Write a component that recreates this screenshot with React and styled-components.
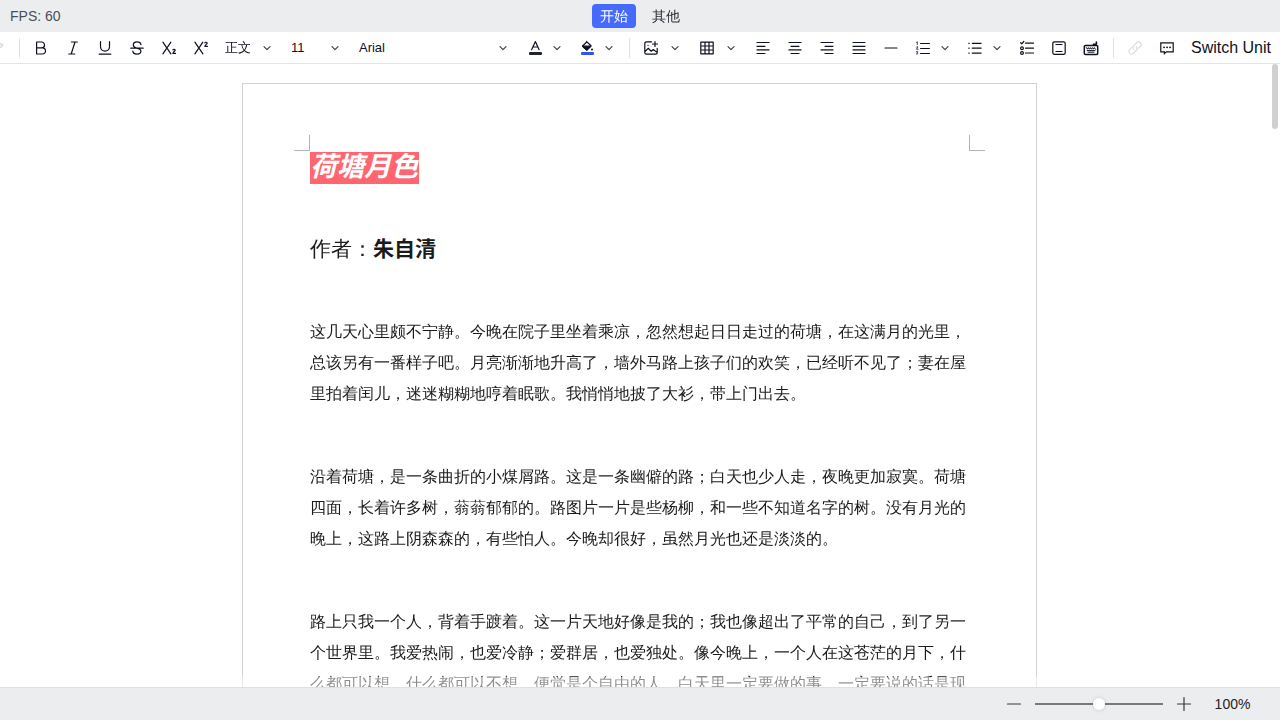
import React, { useState } from "react";
import styled, { createGlobalStyle } from "styled-components";

const textFont = `"Liberation Sans", "WenQuanYi Zen Hei", "Noto Sans CJK JP", sans-serif`;
const boldFont = `"Liberation Sans", "Noto Sans CJK JP", sans-serif`;

const GlobalStyle = createGlobalStyle`
  *, *::before, *::after { box-sizing: border-box; }
  body { margin: 0; font-family: ${textFont}; color: #0e111e; background: #fff; }
  button, select, input { font-family: inherit; color: inherit; margin: 0; }
`;

const Shell = styled.div`
  display: flex;
  flex-direction: column;
  height: 100vh;
  overflow: hidden;
`;

const Header = styled.header`
  display: grid;
  grid-template-columns: 1fr auto 1fr;
  align-items: center;
  flex: none;
  height: 32px;
  background: #ecedef;
  font-size: 14px;
`;

const Fps = styled.span`
  padding-left: 10px;
  color: #4b4d53;
`;

const Tabs = styled.nav`
  display: flex;
  gap: 8px;
`;

const Tab = styled.button`
  height: 24px;
  padding: 0 8px;
  border: 0;
  border-radius: 4px;
  font-size: 14px;
  line-height: 24px;
  color: ${(p) => (p.$active ? "#fff" : "#1f2329")};
  background: ${(p) => (p.$active ? "#466aff" : "transparent")};
`;

const Toolbar = styled.div`
  display: flex;
  align-items: center;
  justify-content: flex-end;
  gap: 8px;
  flex: none;
  height: 32px;
  padding-right: 9px;
  overflow: hidden;
  background: #fff;
  border-bottom: 1px solid #e3e4e8;
`;

const Divider = styled.span`
  flex: none;
  width: 1px;
  height: 20px;
  margin: 0 1px 0 2px;
  background: #e0e1e5;
`;

const ToolButton = styled.button`
  display: flex;
  align-items: center;
  justify-content: center;
  flex: none;
  width: ${(p) => p.$width || 24}px;
  height: 24px;
  padding: 0;
  border: 0;
  border-radius: 4px;
  background: transparent;
  color: ${(p) => (p.disabled ? "#dcdde3" : "#0e111e")};
`;

const TextButton = styled.button`
  flex: none;
  padding: 0 0 0 4px;
  border: 0;
  background: transparent;
  font-size: 16px;
  line-height: 24px;
  white-space: nowrap;
`;

const Split = styled.div`
  display: flex;
  flex: none;
`;

const SelectBox = styled.label`
  display: grid;
  grid-template: "box" 24px / 1fr;
  align-items: center;
  flex: none;
  width: ${(p) => p.$width}px;

  & > * { grid-area: box; }
  & > svg { justify-self: end; margin-right: 6px; pointer-events: none; }
`;

const Select = styled.select`
  appearance: none;
  width: 100%;
  height: 24px;
  padding: 0 0 0 4px;
  border: 0;
  background: transparent;
  font-size: 13px;
`;

const Editor = styled.main`
  position: relative;
  flex: 1;
  min-height: 0;
  padding: 19px 1px 0 0;
  overflow: hidden;
`;

const Page = styled.article`
  width: 795px;
  max-width: 100%;
  min-height: 1123px;
  margin: 0 auto;
  border: 1px solid #d2d2d2;
  background: #fff;
  color: #1b1b1b;
`;

const Margins = styled.div`
  display: flex;
  align-items: flex-end;
  justify-content: space-between;
  height: 67px;
  padding: 0 51px;
`;

const CropMark = styled.span`
  width: 16px;
  height: 16px;
  border: solid #b4b4b4;
  border-width: ${(p) => (p.$side === "left" ? "0 1px 1px 0" : "0 0 1px 1px")};
`;

const Body = styled.div`
  padding: 1px 66px 0 67px;
`;

const Title = styled.h1`
  display: flex;
  margin: 0 0 49px;
  font-family: ${boldFont};
  font-size: 27px;
  line-height: 30px;
  font-style: italic;
`;

const Highlight = styled.span`
  height: 32px;
  padding-right: 1px;
  background: #ff6670;
  color: #fff;
`;

const Author = styled.p`
  margin: 0 0 51px;
  font-size: 21px;
  line-height: 32px;

  strong { font-family: ${boldFont}; }
`;

const Paragraph = styled.p`
  margin: 0 0 52px;
  font-size: 16px;
  line-height: 31px;
`;

const BottomFade = styled.div`
  position: absolute;
  inset: auto 0 0 0;
  height: 10px;
  background: rgba(255, 255, 255, 0.5);
`;

const ScrollThumb = styled.div`
  position: absolute;
  top: 0;
  right: 2px;
  width: 6px;
  height: 65px;
  border-radius: 3px;
  background: #cfd0d2;
`;

const Footer = styled.footer`
  display: flex;
  align-items: center;
  justify-content: flex-end;
  flex: none;
  height: 33px;
  padding-right: 24px;
  background: #ecedef;
  border-top: 1px solid #dfe0e3;
`;

const ZoomButton = styled(ToolButton)`
  color: #35383f;
`;

const Slider = styled.input`
  appearance: none;
  width: 128px;
  height: 12px;
  margin: 0 9px;
  background: linear-gradient(#757a7b, #757a7b) center / 100% 2px no-repeat;

  &::-webkit-slider-thumb {
    appearance: none;
    width: 12px;
    height: 12px;
    border-radius: 50%;
    background: #fff;
    box-shadow: 0 0 4px rgba(0, 0, 0, 0.15);
  }
`;

const ZoomValue = styled.output`
  width: 48px;
  padding-left: 1px;
  margin-left: 12px;
  font-size: 14px;
  text-align: center;
  color: #1f2329;
`;

const Svg = ({ children, size = 16, width = 1.2 }) => (
  <svg
    width={size}
    height={size}
    viewBox={`0 0 ${size} ${size}`}
    fill="none"
    stroke="currentColor"
    strokeWidth={width}
    strokeLinecap="round"
    strokeLinejoin="round"
    aria-hidden="true"
  >
    {children}
  </svg>
);

const Chevron = () => (
  <Svg size={12} width={1.2}>
    <path d="M3 4.7l3 3 3-3" stroke="#3c404a" />
  </Svg>
);

const icons = {
  painter: <path d="M5 3h5.5a1.6 1.6 0 0 1 1.6 1.6v3H7v5M12.1 4.2h1.6v1.6h-1.6" />,
  bold: <path d="M3.6 2h5a2.9 2.9 0 0 1 0 5.8h-5zM3.6 7.8h5.8a3.1 3.1 0 0 1 0 6.2H3.6z" />,
  italic: <path d="M6.4 2h6M3.8 14h6M10 2L6.2 14" />,
  underline: <path d="M3.5 1.7v5.1a4.5 4.3 0 0 0 9 0V1.7M2.2 14.2h11.6" />,
  strike: <path d="M1.8 8.2h12.4M12 4.6C11.7 2.9 10.2 1.9 8 1.9S4.3 3 4.3 4.9c0 2 1.8 2.7 3.7 3.3 2.2.6 3.9 1.3 3.9 3.1 0 1.7-1.6 2.8-3.9 2.8s-4-1.1-4.2-3" />,
  subscript: (
    <>
      <path d="M1.9 2.2l8 11.6M9.9 2.2l-8 11.6" />
      <path d="M11.9 10c.2-.9 2.3-.9 2.3.3 0 .9-2.3 1.7-2.3 3.1h2.6" strokeWidth="1.2" />
    </>
  ),
  superscript: (
    <>
      <path d="M1.9 2.2l8 11.6M9.9 2.2l-8 11.6" />
      <path d="M11.9 2.9c.2-.9 2.3-.9 2.3.3 0 .9-2.3 1.7-2.3 3.1h2.6" strokeWidth="1.2" />
    </>
  ),
  color: (
    <>
      <path d="M4.6 9.7L8.4 1.6l3.7 8.1M5.8 7h5" />
      <rect x="2" y="12" width="13" height="3" rx="1" fill="#20242e" stroke="none" />
    </>
  ),
  fill: (
    <>
      <path d="M7.4 1.4l4.6 4.4-4.2 4.3-4.3-4.1L7.8 2" />
      <path d="M3.6 6.2h8.2L7.8 10z" fill="currentColor" />
      <circle cx="13" cy="9.4" r="1" fill="currentColor" stroke="none" />
      <rect x="2" y="12" width="13" height="3" rx="1" fill="#2f55f0" stroke="none" />
    </>
  ),
  image: <path d="M8.6 1.8H3.4a1.6 1.6 0 0 0-1.6 1.6v9.2a1.6 1.6 0 0 0 1.6 1.6h9.2a1.6 1.6 0 0 0 1.6-1.6V8.4M12 1.5v5M9.5 4h5M2 11.5l3.2-3.2 3 2.9 2.1-1.7 3.7 2.9M5 5.3h.1" />,
  table: <path d="M1.8 2.2h12.4v11.6H1.8zM1.8 6h12.4M1.8 10h12.4M6 2.2v11.6M10 2.2v11.6" />,
  left: <path d="M2 2.5h12M2 6.3h8M2 9.9h12M2 13.5h8" />,
  center: <path d="M2 2.5h12M4 6.3h8M2 9.9h12M4 13.5h8" />,
  right: <path d="M2 2.5h12M6 6.3h8M2 9.9h12M6 13.5h8" />,
  justify: <path d="M2 2.5h12M2 6.3h12M2 9.9h12M2 13.5h12" />,
  rule: <path d="M2 8h12" />,
  ordered: (
    <>
      <path d="M5.6 3.5h8.8M5.6 8.5h8.8M5.6 13.5h8.8" />
      <path d="M1.5 2.3l.8-.5v2.7M1.4 7c.3-.8 1.5-.6 1.4.1L1.5 9.3h1.5M1.4 11.7h1.4l-.7 1c1.3 0 1 1.8-.7 1.3" strokeWidth="0.8" />
    </>
  ),
  bullets: <path d="M5.3 3.3h8.8M5.3 8.2h8.8M5.3 13.1h8.8M1.8 3.3h.4M1.8 8.2h.4M1.8 13.1h.4" />,
  checklist: (
    <>
      <path d="M6.5 3.2h8M6.5 8.2h8M6.5 13h8M1.6 2.7l1.2 1.1 2-2.3" />
      <circle cx="3" cy="8.2" r="1.4" />
      <circle cx="3" cy="13" r="1.4" />
    </>
  ),
  pageSetup: (
    <>
      <rect x="1.8" y="1.8" width="12.4" height="12.6" rx="1.6" />
      <path d="M5 4.5h6M5 11.5h6" />
    </>
  ),
  keyboard: (
    <>
      <rect x="1.3" y="5.4" width="13.4" height="9" rx="1.2" strokeWidth="1.5" />
      <path d="M3.4 7.6l1 1.6 1-1.6 1 1.6 1-1.6 1 1.6 1-1.6 1 1.6 1-1.6 1 1.6M4.2 10.6h7.8M5 12.2h6" strokeWidth="1" />
      <path d="M10.5 5V4.2h2.9V2" strokeWidth="1.6" />
    </>
  ),
  link: <path d="M6.8 9.2a2.6 2.6 0 0 1 0-3.7l2.9-2.9a2.6 2.6 0 0 1 3.7 3.7l-2.1 2.1M9.2 6.8a2.6 2.6 0 0 1 0 3.7l-2.9 2.9a2.6 2.6 0 0 1-3.7-3.7l2.1-2.1" />,
  comment: (
    <>
      <path d="M1.8 2.8h12.4v9H7.4l-2 1.8v-1.8H1.8z" strokeLinejoin="miter" />
      <path d="M5 7.3h.1M8 7.3h.1M11 7.3h.1" strokeWidth="1.8" />
    </>
  ),
  minus: <path d="M1.5 8h13" />,
  plus: <path d="M1.5 8h13M8 1.5v13" />,
};

const Tool = ({ name, label, disabled }) => (
  <ToolButton type="button" aria-label={label} disabled={disabled}>
    <Svg>{icons[name]}</Svg>
  </ToolButton>
);

const SplitTool = ({ name, label, arrow = 20 }) => (
  <Split>
    <Tool name={name} label={label} />
    <ToolButton type="button" $width={arrow} aria-label={`${label} 选项`}>
      <Chevron />
    </ToolButton>
  </Split>
);

const Picker = ({ label, width, options }) => (
  <SelectBox $width={width}>
    <Select aria-label={label}>
      {options.map((o) => (
        <option key={o}>{o}</option>
      ))}
    </Select>
    <Chevron />
  </SelectBox>
);

const paragraphs = [
  "这几天心里颇不宁静。今晚在院子里坐着乘凉，忽然想起日日走过的荷塘，在这满月的光里，总该另有一番样子吧。月亮渐渐地升高了，墙外马路上孩子们的欢笑，已经听不见了；妻在屋里拍着闰儿，迷迷糊糊地哼着眠歌。我悄悄地披了大衫，带上门出去。",
  "沿着荷塘，是一条曲折的小煤屑路。这是一条幽僻的路；白天也少人走，夜晚更加寂寞。荷塘四面，长着许多树，蓊蓊郁郁的。路图片一片是些杨柳，和一些不知道名字的树。没有月光的晚上，这路上阴森森的，有些怕人。今晚却很好，虽然月光也还是淡淡的。",
  "路上只我一个人，背着手踱着。这一片天地好像是我的；我也像超出了平常的自己，到了另一个世界里。我爱热闹，也爱冷静；爱群居，也爱独处。像今晚上，一个人在这苍茫的月下，什么都可以想，什么都可以不想，便觉是个自由的人。白天里一定要做的事，一定要说的话是现",
];

export default function App() {
  const [zoom, setZoom] = useState(100);
  return (
    <>
      <GlobalStyle />
      <Shell>
        <Header>
          <Fps>FPS: 60</Fps>
          <Tabs>
            <Tab type="button" $active>开始</Tab>
            <Tab type="button">其他</Tab>
          </Tabs>
        </Header>
        <Toolbar role="toolbar">
          <Tool name="painter" label="格式刷" disabled />
          <Divider />
          <Tool name="bold" label="粗体" />
          <Tool name="italic" label="斜体" />
          <Tool name="underline" label="下划线" />
          <Tool name="strike" label="删除线" />
          <Tool name="subscript" label="下标" />
          <Tool name="superscript" label="上标" />
          <Picker label="样式" width={58} options={["正文"]} />
          <Picker label="字号" width={60} options={["11", "12", "14"]} />
          <Picker label="字体" width={160} options={["Arial"]} />
          <SplitTool name="color" label="文字颜色" />
          <SplitTool name="fill" label="填充颜色" />
          <Divider />
          <SplitTool name="image" label="图片" arrow={24} />
          <SplitTool name="table" label="表格" arrow={24} />
          <Tool name="left" label="左对齐" />
          <Tool name="center" label="居中" />
          <Tool name="right" label="右对齐" />
          <Tool name="justify" label="两端对齐" />
          <Tool name="rule" label="分割线" />
          <SplitTool name="ordered" label="有序列表" />
          <SplitTool name="bullets" label="无序列表" />
          <Tool name="checklist" label="任务列表" />
          <Tool name="pageSetup" label="页眉页脚" />
          <Tool name="keyboard" label="快捷键" />
          <Divider />
          <Tool name="link" label="链接" disabled />
          <Tool name="comment" label="评论" />
          <TextButton type="button">Switch Unit</TextButton>
        </Toolbar>
        <Editor>
          <Page>
            <Margins>
              <CropMark $side="left" />
              <CropMark $side="right" />
            </Margins>
            <Body>
              <Title>
                <Highlight>荷塘月色</Highlight>
              </Title>
              <Author>
                作者：<strong>朱自清</strong>
              </Author>
              {paragraphs.map((text) => (
                <Paragraph key={text}>{text}</Paragraph>
              ))}
            </Body>
          </Page>
          <BottomFade />
          <ScrollThumb />
        </Editor>
        <Footer>
          <ZoomButton type="button" aria-label="缩小" onClick={() => setZoom(Math.max(0, zoom - 10))}>
            <Svg>{icons.minus}</Svg>
          </ZoomButton>
          <Slider
            type="range"
            aria-label="缩放"
            min={0}
            max={200}
            value={zoom}
            onChange={(e) => setZoom(Number(e.target.value))}
          />
          <ZoomButton type="button" aria-label="放大" onClick={() => setZoom(Math.min(200, zoom + 10))}>
            <Svg>{icons.plus}</Svg>
          </ZoomButton>
          <ZoomValue>{zoom}%</ZoomValue>
        </Footer>
      </Shell>
    </>
  );
}
